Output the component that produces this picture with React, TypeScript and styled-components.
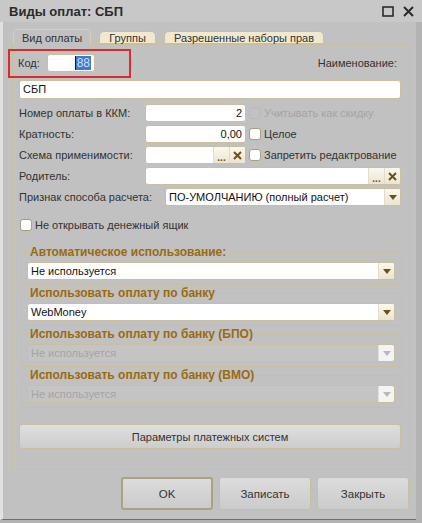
import React from 'react';
import styled, {createGlobalStyle} from "styled-components";

const colors = {
    body: '#c1c1c1',
    title: '#c8c8c8',
    outer: '#b3b3b3',
    beige: '#c9bf9f',
    beigeDark: '#aca282',
    tab: '#f1e9cf',
    text: '#333333',
    muted: '#a4a4a4',
    legend: '#9b6a0c',
    arrow: '#6e5210',
}

const GlobalStyle = createGlobalStyle`
  body {
    margin: 0;
    background: ${colors.outer};
    font-family: "Liberation Sans", Arial, sans-serif;
    font-size: 11px;
    color: ${colors.text};
  }
`

const Page = styled.div`
  position: relative;
  width: 422px;
  height: 523px;
  display: flex;
  flex-direction: column;
  overflow: hidden;
`

const TitleBar = styled.div`
  height: 22px;
  display: flex;
  align-items: center;
  padding: 0 9px;
  background: ${colors.title};
  font-weight: bold;
  font-size: 13px;
  color: #2b2b2b;
`

const TitleText = styled.div`
  flex-grow: 1;
`

const TitleIcons = styled.div`
  display: flex;
  align-items: center;
  gap: 9px;
  margin-right: -1px;
`

const Window = styled.div`
  width: 416px;
  height: 498px;
  background: ${colors.body};
  border-left: 3px solid #e2e2e2;
  border-bottom: 1px solid #6e6e6e;
  padding: 7px 0 0 9px;
  box-sizing: border-box;
  display: flex;
  flex-direction: column;
`

const Tabs = styled.div`
  display: flex;
  align-items: flex-end;
  gap: 8px;
  margin-left: 1px;
  height: 15px;
  position: relative;
  z-index: 1;
`

const Tab = styled.div<{ active?: boolean }>`
  height: ${p => p.active ? 16 : 13}px;
  margin-bottom: ${p => p.active ? -1 : 0}px;
  padding: 0 ${p => p.active ? 8 : 9}px;
  box-sizing: border-box;
  display: flex;
  align-items: center;
  border: 1px solid ${p => p.active ? '#d8cfb0' : colors.beige};
  border-bottom: ${p => p.active ? 'none' : `1px solid ${colors.beige}`};
  border-radius: 5px 5px 0 0;
  background: ${p => p.active ? colors.body : colors.tab};
  white-space: nowrap;
`

const Panel = styled.div`
  width: 398px;
  height: 426px;
  box-sizing: border-box;
  border: 1px solid ${colors.beige};
  padding: 9px 8px 0 6px;
  display: flex;
  flex-direction: column;
`

const Row = styled.div<{ top?: number }>`
  display: flex;
  align-items: center;
  height: 18px;
  margin-top: ${p => p.top ?? 3}px;
`

const Label = styled.div<{ width?: number }>`
  width: ${p => p.width ? `${p.width}px` : 'auto'};
  flex-shrink: 0;
  white-space: nowrap;
`

const Spacer = styled.div`
  flex-grow: 1;
`

const Field = styled.div<{ width?: number, height?: number, disabled?: boolean }>`
  ${p => p.width ? `width: ${p.width}px;` : 'flex-grow: 1;'}
  height: ${p => p.height ?? 18}px;
  box-sizing: border-box;
  display: flex;
  align-items: stretch;
  border: 1px solid ${colors.beige};
  border-radius: 3px;
  background: ${p => p.disabled ? '#c4c4c4' : '#ffffff'};
  overflow: hidden;
`

const FieldText = styled.div<{ align?: string, disabled?: boolean }>`
  flex-grow: 1;
  display: flex;
  align-items: center;
  justify-content: ${p => p.align === 'right' ? 'flex-end' : 'flex-start'};
  padding: 0 3px;
  color: ${p => p.disabled ? colors.muted : '#111111'};
  white-space: nowrap;
`

const Selected = styled.span`
  background: #3b7bd4;
  color: #cfe0f7;
  padding: 0 1px;
  border-left: 1px solid #1a1a1a;
  font-size: 12px;
`

const FieldButton = styled.div<{ disabled?: boolean }>`
  width: 15px;
  display: flex;
  align-items: center;
  justify-content: center;
  border-left: 1px solid ${p => p.disabled ? '#e0e0e0' : '#e4dcc4'};
  background: ${p => p.disabled ? '#f4f4f4' : 'linear-gradient(#fbf8ef, #ebe4cf)'};
  color: ${colors.arrow};
  font-weight: bold;
  font-size: 10px;
`

const Dots = styled.span`
  margin-top: 4px;
`

const Check = styled.div<{ disabled?: boolean }>`
  width: 12px;
  height: 12px;
  flex-shrink: 0;
  box-sizing: border-box;
  border: 1px solid ${p => p.disabled ? '#b9b9b9' : '#a79f84'};
  border-radius: 3px;
  background: ${p => p.disabled ? 'transparent' : '#ffffff'};
  margin: 0 3px 0 3px;
`

const CheckLabel = styled.div<{ disabled?: boolean }>`
  color: ${p => p.disabled ? colors.muted : colors.text};
  white-space: nowrap;
`

const Group = styled.div<{ top: number }>`
  margin: ${p => p.top}px -1px 0 2px;
  height: 33px;
  box-sizing: border-box;
  border: 1px solid ${colors.beige};
  border-radius: 4px;
  padding: 0 6px 0 5px;
  display: flex;
  flex-direction: column;
`

const Legend = styled.div`
  align-self: flex-start;
  margin: -8px 0 0 2px;
  padding: 0 2px 0 1px;
  height: 15px;
  line-height: 15px;
  background: ${colors.body};
  color: ${colors.legend};
  font-weight: bold;
  font-size: 12px;
  white-space: nowrap;
`

const GroupField = styled.div`
  margin-top: 2px;
  display: flex;
`

const WideButton = styled.div`
  margin-top: 16px;
  height: 25px;
  box-sizing: border-box;
  border: 1px solid ${colors.beige};
  border-radius: 3px;
  background: linear-gradient(#dedede, #cdcdcd);
  display: flex;
  align-items: center;
  justify-content: center;
`

const Footer = styled.div`
  display: flex;
  justify-content: flex-end;
  gap: 6px;
  padding-right: 7px;
  margin-top: 7px;
`

const Button = styled.div<{ primary?: boolean }>`
  width: 92px;
  height: 33px;
  box-sizing: border-box;
  border: ${p => p.primary ? 2 : 1}px solid ${p => p.primary ? colors.beigeDark : colors.beige};
  border-radius: 3px;
  background: linear-gradient(#dcdcdc, #cbcbcb);
  display: flex;
  align-items: center;
  justify-content: center;
  font-size: 11.5px;
`

const Highlight = styled.div`
  position: absolute;
  left: 8px;
  top: 49px;
  width: 123px;
  height: 29px;
  box-sizing: border-box;
  border: 2px solid #d92b2b;
  pointer-events: none;
`

const Arrow: React.FC<{ disabled?: boolean }> = ({disabled}) => (
    <svg width="8" height="5" viewBox="0 0 8 5">
        <polygon points="0,0 8,0 4,5" fill={disabled ? '#b8b8b8' : colors.arrow}/>
    </svg>
)

const Cross: React.FC = () => (
    <svg width="9" height="9" viewBox="0 0 9 9">
        <path d="M1 1L8 8M8 1L1 8" stroke={colors.arrow} strokeWidth="2"/>
    </svg>
)

const Select: React.FC<{ value: string, disabled?: boolean }> = ({value, disabled}) => (
    <Field disabled={disabled}>
        <FieldText disabled={disabled}>{value}</FieldText>
        <FieldButton disabled={disabled}><Arrow disabled={disabled}/></FieldButton>
    </Field>
)

const groups = [
    {title: 'Автоматическое использование:', value: 'Не используется', top: 18},
    {title: 'Использовать оплату по банку', value: 'WebMoney', top: 8},
    {title: 'Использовать оплату по банку (БПО)', value: 'Не используется', top: 8, disabled: true},
    {title: 'Использовать оплату по банку (ВМО)', value: 'Не используется', top: 8, disabled: true},
]

const App: React.FC = () => {
    return (
        <Page>
            <GlobalStyle/>
            <TitleBar>
                <TitleText>Виды оплат: СБП</TitleText>
                <TitleIcons>
                    <svg width="12" height="11" viewBox="0 0 12 11">
                        <rect x="1" y="1" width="10" height="9" fill="none" stroke="#2b2b2b" strokeWidth="1.6"/>
                    </svg>
                    <svg width="11" height="11" viewBox="0 0 11 11">
                        <path d="M1 1L10 10M10 1L1 10" stroke="#2b2b2b" strokeWidth="2"/>
                    </svg>
                </TitleIcons>
            </TitleBar>
            <Window>
                <Tabs>
                    <Tab active>Вид оплаты</Tab>
                    <Tab>Группы</Tab>
                    <Tab>Разрешенные наборы прав</Tab>
                </Tabs>
                <Panel>
                    <Row top={0}>
                        <Label width={29} style={{marginLeft: -1}}>Код:</Label>
                        <Field width={48}>
                            <FieldText align="right"><Selected>88</Selected></FieldText>
                        </Field>
                        <Spacer/>
                        <Label style={{marginRight: 4}}>Наименование:</Label>
                    </Row>
                    <Row top={8}>
                        <Field height={19}><FieldText>СБП</FieldText></Field>
                    </Row>
                    <Row top={6}>
                        <Label width={126}>Номер оплаты в ККМ:</Label>
                        <Field width={101}><FieldText align="right">2</FieldText></Field>
                        <Check disabled/>
                        <CheckLabel disabled>Учитывать как скидку</CheckLabel>
                    </Row>
                    <Row>
                        <Label width={126}>Кратность:</Label>
                        <Field width={101}><FieldText align="right">0,00</FieldText></Field>
                        <Check/>
                        <CheckLabel>Целое</CheckLabel>
                    </Row>
                    <Row>
                        <Label width={126}>Схема применимости:</Label>
                        <Field width={101}>
                            <FieldText/>
                            <FieldButton><Dots>...</Dots></FieldButton>
                            <FieldButton><Cross/></FieldButton>
                        </Field>
                        <Check/>
                        <CheckLabel>Запретить редактрование</CheckLabel>
                    </Row>
                    <Row>
                        <Label width={126}>Родитель:</Label>
                        <Field>
                            <FieldText/>
                            <FieldButton><Dots>...</Dots></FieldButton>
                            <FieldButton><Cross/></FieldButton>
                        </Field>
                    </Row>
                    <Row>
                        <Label width={146}>Признак способа расчета:</Label>
                        <Select value="ПО-УМОЛЧАНИЮ (полный расчет)"/>
                    </Row>
                    <Row top={10}>
                        <Check style={{marginLeft: 1}}/>
                        <CheckLabel>Не открывать денежный ящик</CheckLabel>
                    </Row>
                    {
                        groups.map((g, index) =>
                            <Group key={index} top={g.top}>
                                <Legend>{g.title}</Legend>
                                <GroupField>
                                    <Select value={g.value} disabled={g.disabled}/>
                                </GroupField>
                            </Group>
                        )
                    }
                    <WideButton>Параметры платежных систем</WideButton>
                </Panel>
                <Footer>
                    <Button primary>OK</Button>
                    <Button>Записать</Button>
                    <Button>Закрыть</Button>
                </Footer>
            </Window>
            <Highlight/>
        </Page>
    );
};

export default App;
